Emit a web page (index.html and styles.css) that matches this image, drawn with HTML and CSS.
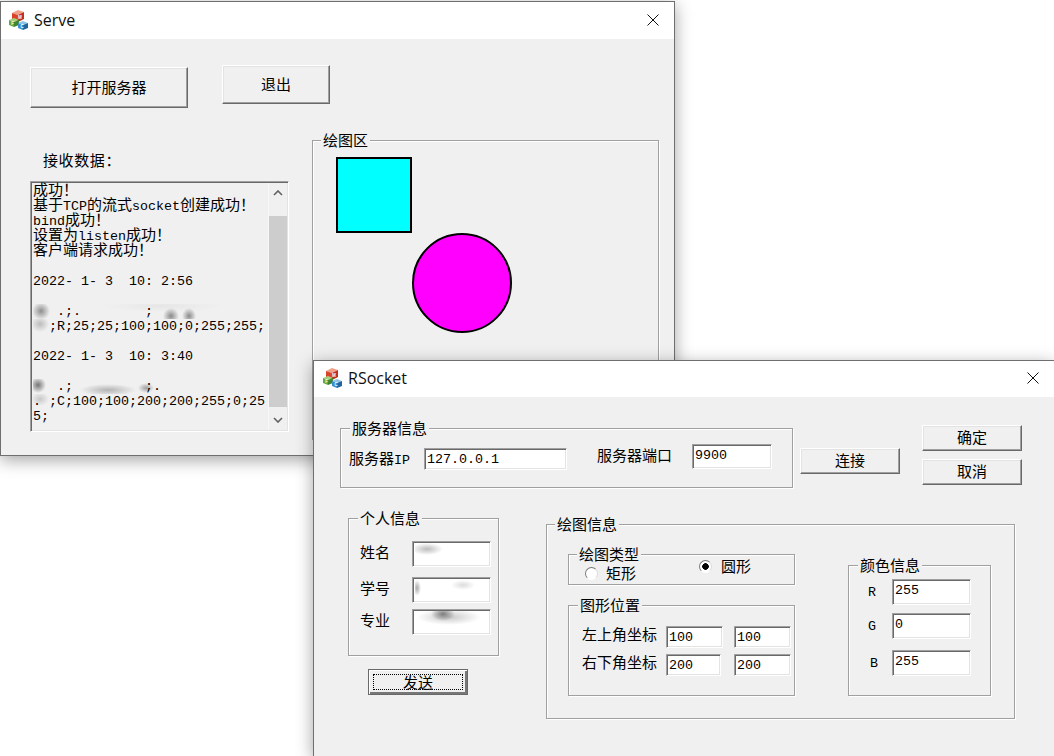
FILE: index.html
```html
<!DOCTYPE html>
<html lang="zh">

<head>
  <meta charset="UTF-8">
  <title>Serve / RSocket</title>
  <link rel="stylesheet" href="styles.css">
</head>

<body>

  <!-- Serve 窗口 -->
  <div class="window serve">
    <div class="titlebar">
      <svg class="app-icon" viewBox="0 0 19 20">
        <g id="mfc">
          <polygon points="3,3 9,0 15,2 9,5" fill="#f0a088" />
          <polygon points="3,3 9,5 9,12 3,10" fill="#d8432a" />
          <polygon points="9,5 15,2 15,9 9,12" fill="#c2301c" />
          <polygon points="0,10 5,8 10,10 5,12" fill="#a4d07e" />
          <polygon points="0,10 5,12 5,17 0,15" fill="#5fa83f" />
          <polygon points="5,12 10,10 10,15 5,17" fill="#3f8430" />
          <polygon points="9,13 14,11 19,13 14,15" fill="#8cc4e8" />
          <polygon points="9,13 14,15 14,20 9,18" fill="#3b8fca" />
          <polygon points="14,15 19,13 19,18 14,20" fill="#1f669f" />
          <text x="9" y="8.5" class="icon-letter">M</text>
          <text x="2.2" y="15" class="icon-letter">F</text>
          <text x="11.5" y="18" class="icon-letter">C</text>
        </g>
      </svg>
      <span class="title-text">Serve</span>
      <svg class="close-x" viewBox="0 0 12 12">
        <path d="M0.5 0.5 L11.5 11.5 M11.5 0.5 L0.5 11.5" stroke="#111" fill="none" />
      </svg>
    </div>
    <div class="dialog serve-body">
      <div class="serve-buttons">
        <div class="btn btn-open">打开服务器</div>
        <div class="btn btn-quit">退出</div>
      </div>
      <div class="serve-main">
        <div class="serve-left">
          <div class="recv-label">接收数据：</div>
          <div class="log-box">
            <div class="log-text">
              <div class="log-line"><span class="cn">成功！</span></div>
              <div class="log-line"><span class="cn">基于</span>TCP<span class="cn">的流式</span>socket<span class="cn">创建成功！</span></div>
              <div class="log-line">bind<span class="cn">成功！</span></div>
              <div class="log-line"><span class="cn">设置为</span>listen<span class="cn">成功！</span></div>
              <div class="log-line"><span class="cn">客户端请求成功！</span></div>
              <div class="log-line"></div>
              <div class="log-line">2022- 1- 3  10: 2:56</div>
              <div class="log-line"></div>
              <div class="log-line smudge-a">   .;.        ;</div>
              <div class="log-line smudge-b">  ;R;25;25;100;100;0;255;255;</div>
              <div class="log-line"></div>
              <div class="log-line">2022- 1- 3  10: 3:40</div>
              <div class="log-line"></div>
              <div class="log-line smudge-c">   .;         ;.</div>
              <div class="log-line smudge-d">. ;C;100;100;200;200;255;0;25</div>
              <div class="log-line">5;</div>
            </div>
            <div class="scrollbar">
              <svg class="arrow" viewBox="0 0 10 6"><path d="M1 5 L5 1 L9 5" stroke="#606060" stroke-width="1.6" fill="none" /></svg>
              <div class="scroll-track"><div class="scroll-thumb"></div></div>
              <svg class="arrow" viewBox="0 0 10 6"><path d="M1 1 L5 5 L9 1" stroke="#606060" stroke-width="1.6" fill="none" /></svg>
            </div>
          </div>
        </div>
        <div class="group draw-area">
          <span class="group-title">绘图区</span>
          <svg class="canvas" width="345" height="298">
            <rect x="24" y="17" width="74" height="74" fill="#00ffff" stroke="#000" stroke-width="2" />
            <circle cx="149" cy="142" r="49" fill="#ff00ff" stroke="#000" stroke-width="2" />
          </svg>
        </div>
      </div>
    </div>
  </div>

  <!-- RSocket 窗口 -->
  <div class="window rsocket">
    <div class="titlebar">
      <svg class="app-icon" viewBox="0 0 19 20"><use href="#mfc" /></svg>
      <span class="title-text">RSocket</span>
      <svg class="close-x" viewBox="0 0 12 12">
        <path d="M0.5 0.5 L11.5 11.5 M11.5 0.5 L0.5 11.5" stroke="#111" fill="none" />
      </svg>
    </div>
    <div class="dialog rsocket-body">

      <div class="top-row">
        <div class="group server-group">
          <span class="group-title">服务器信息</span>
          <div class="label ip-label">服务器<span class="latin">IP</span></div>
          <div class="edit ip-edit">127.0.0.1</div>
          <div class="label port-label">服务器端口</div>
          <div class="edit port-edit">9900</div>
        </div>
        <div class="btn btn-connect">连接</div>
        <div class="ok-col">
          <div class="btn btn-small">确定</div>
          <div class="btn btn-small">取消</div>
        </div>
      </div>

      <div class="bottom-row">
        <div class="person-col">
          <div class="group person-group">
            <span class="group-title">个人信息</span>
            <div class="person-row">
              <div class="label person-label">姓名</div>
              <div class="edit person-edit"><span class="blot blot-name"></span></div>
            </div>
            <div class="person-row">
              <div class="label person-label">学号</div>
              <div class="edit person-edit"><span class="blot blot-id"></span></div>
            </div>
            <div class="person-row">
              <div class="label person-label">专业</div>
              <div class="edit person-edit"><span class="blot blot-major"></span></div>
            </div>
          </div>
          <div class="btn btn-send"><span class="focus-box">发送</span></div>
        </div>

        <div class="group draw-group">
          <span class="group-title">绘图信息</span>
          <div class="draw-left">
            <div class="group type-group">
              <span class="group-title">绘图类型</span>
              <div class="radio-item radio-rect"><span class="radio"></span>矩形</div>
              <div class="radio-item radio-circle"><span class="radio checked"></span>圆形</div>
            </div>
            <div class="group pos-group">
              <span class="group-title">图形位置</span>
              <div class="pos-row">
                <div class="label pos-label">左上角坐标</div>
                <div class="edit pos-edit">100</div>
                <div class="edit pos-edit">100</div>
              </div>
              <div class="pos-row">
                <div class="label pos-label">右下角坐标</div>
                <div class="edit pos-edit narrow">200</div>
                <div class="edit pos-edit">200</div>
              </div>
            </div>
          </div>
          <div class="group color-group">
            <span class="group-title">颜色信息</span>
            <div class="color-row">
              <div class="color-label latin">R</div>
              <div class="edit color-edit">255</div>
            </div>
            <div class="color-row">
              <div class="color-label latin">G</div>
              <div class="edit color-edit">0</div>
            </div>
            <div class="color-row">
              <div class="color-label latin shift">B</div>
              <div class="edit color-edit">255</div>
            </div>
          </div>
        </div>
      </div>

    </div>
  </div>

</body>

</html>
```

FILE: styles.css
```css
* {
  box-sizing: border-box;
}

html,
body {
  margin: 0;
  height: 100%;
  overflow: hidden;
  background: #fff;
}

body {
  position: relative;
  font-family: "Noto Sans CJK SC", sans-serif;
  font-size: 15px;
  color: #000;
}

.latin {
  font-family: "Liberation Mono", monospace;
  font-size: 13.33px;
}

/* 窗口 */
.window {
  position: absolute;
  border: 1px solid #6f6f6f;
  background: #f0f0f0;
  box-shadow: 0 4px 16px rgba(0, 0, 0, 0.36);
  overflow: hidden;
}

.serve {
  left: 0;
  top: 1px;
  width: 675px;
  height: 455px;
}

.rsocket {
  left: 313px;
  top: 360px;
  width: 741px;
  height: 396px;
  border-right: none;
  border-bottom: none;
}

.titlebar {
  display: flex;
  align-items: center;
  height: 37px;
  padding: 0 15px 2px 8px;
  background: #fff;
}

.rsocket .titlebar {
  height: 36px;
  padding-left: 9px;
}

.app-icon {
  width: 19px;
  height: 20px;
  margin-right: 6px;
}

.icon-letter {
  font-family: "Liberation Sans", sans-serif;
  font-size: 4.5px;
  font-weight: bold;
  fill: #fff;
}

.title-text {
  font-family: "Open Sans", sans-serif;
  font-size: 16px;
  color: #111;
}

.close-x {
  width: 12px;
  height: 12px;
  margin-left: auto;
}

/* 控件 */
.btn {
  display: flex;
  align-items: center;
  justify-content: center;
  padding-bottom: 3px;
  background: #f0f0f0;
  border: 1px solid;
  border-color: #fff #696969 #696969 #fff;
  box-shadow: inset -1px -1px 0 #a0a0a0, inset 1px 1px 0 #e3e3e3;
}

.edit {
  flex: none;
  font-family: "Liberation Mono", monospace;
  font-size: 13.33px;
  line-height: 18px;
  padding: 2px 0 0 2px;
  background: #fff;
  border: 1px solid;
  border-color: #a0a0a0 #fff #fff #a0a0a0;
  box-shadow: inset 1px 1px 0 #696969, inset -1px -1px 0 #e3e3e3;
  white-space: pre;
  overflow: hidden;
}

.group {
  position: relative;
  border: 1px solid #a0a0a0;
  box-shadow: 1px 1px 0 #fff, inset 1px 1px 0 #fff;
}

.group-title {
  position: absolute;
  top: -11px;
  left: 9px;
  padding: 0 2px;
  line-height: 20px;
  background: #f0f0f0;
  white-space: nowrap;
}

.label {
  flex: none;
  line-height: 20px;
  white-space: nowrap;
}

/* Serve */
.serve-body {
  height: 416px;
  padding: 26px 0 0 29px;
}

.serve-buttons {
  display: flex;
  align-items: flex-start;
  height: 43px;
}

.btn-open {
  width: 158px;
  height: 41px;
  margin-top: 2px;
}

.btn-quit {
  width: 108px;
  height: 39px;
  margin-left: 34px;
}

.serve-main {
  display: flex;
  margin-top: 32px;
}

.serve-left {
  width: 259px;
}

.recv-label {
  margin-top: 10px;
  padding-left: 13px;
  line-height: 20px;
  letter-spacing: 0.6px;
}

.log-box {
  display: flex;
  height: 251px;
  margin-top: 11px;
  background: #f0f0f0;
  border: 1px solid;
  border-color: #a0a0a0 #fff #fff #a0a0a0;
  box-shadow: inset 1px 1px 0 #696969, inset -1px -1px 0 #e3e3e3;
  padding: 1px;
}

.log-text {
  flex: 1;
  padding: 1px 0 0 1px;
  font-family: "Liberation Mono", monospace;
  font-size: 13.33px;
  line-height: 15px;
}

.log-line {
  height: 15px;
  white-space: pre;
}

.cn {
  font-family: "Noto Sans CJK SC", sans-serif;
  font-size: 15px;
  line-height: 0;
}

/* 打码的部分 */
.smudge-a {
  background:
    radial-gradient(ellipse 9px 9px at 8px 7px, #8e8e8e, transparent),
    radial-gradient(ellipse 8px 8px at 138px 12px, #8a8a8a, transparent),
    radial-gradient(ellipse 7px 8px at 156px 12px, #8a8a8a, transparent),
    radial-gradient(ellipse 60px 6px at 130px 2px, #e6e6e6, transparent);
}

.smudge-b {
  background:
    radial-gradient(ellipse 9px 8px at 7px 5px, #bcbcbc, transparent);
}

.smudge-c {
  background:
    radial-gradient(ellipse 8px 8px at 5px 6px, #747474, transparent),
    radial-gradient(ellipse 28px 6px at 75px 11px, #b4b4b4, transparent),
    radial-gradient(ellipse 8px 5px at 113px 9px, #a0a0a0, transparent);
}

.smudge-d {
  background:
    radial-gradient(ellipse 9px 7px at 7px 5px, #c8c8c8, transparent);
}

.scrollbar {
  display: flex;
  flex-direction: column;
  align-items: center;
  width: 19px;
  background: #f0f0f0;
  border-left: 1px solid #f8f8f8;
}

.arrow {
  flex: none;
  width: 10px;
  height: 6px;
  margin: 7px 0;
}

.scroll-track {
  flex: 1;
  width: 100%;
  padding: 13px 0 3px;
}

.scroll-thumb {
  height: 100%;
  background: #cdcdcd;
}

.draw-area {
  width: 347px;
  height: 300px;
  margin-left: 23px;
}

.draw-area .group-title {
  left: 8px;
}

.canvas {
  display: block;
}

/* RSocket */
.rsocket-body {
  height: 360px;
  padding: 28px 0 0 26px;
}

.top-row {
  display: flex;
  align-items: flex-start;
  height: 63px;
}

.server-group {
  display: flex;
  align-items: flex-start;
  width: 453px;
  height: 60px;
  margin-top: 3px;
  padding: 15px 0 0 8px;
}

.ip-label {
  width: 75px;
  margin-top: 4px;
}

.ip-edit {
  width: 143px;
  height: 22px;
  margin-top: 4px;
}

.port-label {
  width: 95px;
  margin: 1px 0 0 30px;
}

.port-edit {
  width: 80px;
  height: 25px;
}

.btn-connect {
  width: 100px;
  height: 26px;
  margin: 23px 0 0 7px;
}

.ok-col {
  display: flex;
  flex-direction: column;
  gap: 8px;
  margin-left: 22px;
}

.btn-small {
  width: 100px;
  height: 26px;
}

.bottom-row {
  display: flex;
  align-items: flex-start;
  margin: 30px 0 0 8px;
}

.person-col {
  width: 151px;
}

.person-group {
  height: 138px;
  padding: 22px 0 0 11px;
}

.person-row {
  display: flex;
  align-items: center;
}

.person-row + .person-row {
  margin-top: 10px;
}

.person-row:last-child {
  margin-top: 6px;
}

.person-label {
  width: 52px;
  margin-bottom: 4px;
}

.person-edit {
  width: 79px;
  height: 26px;
  padding-top: 1px;
}

.blot {
  display: block;
  height: 14px;
}

.blot-name {
  width: 32px;
  background: radial-gradient(ellipse 16px 6px at 12px 6px, #bcbcbc, transparent);
}

.blot-id {
  width: 74px;
  height: 16px;
  background:
    radial-gradient(ellipse 4px 8px at 2px 9px, #a8a8a8, transparent),
    radial-gradient(ellipse 12px 5px at 48px 6px, #dcdcdc, transparent);
}

.blot-major {
  width: 68px;
  height: 16px;
  background:
    radial-gradient(ellipse 12px 7px at 28px 3px, #7d7d7d, transparent),
    radial-gradient(ellipse 32px 8px at 34px 6px, #c8c8c8, transparent);
}

.btn-send {
  width: 100px;
  height: 26px;
  margin: 13px 0 0 20px;
  padding: 3px;
  border-color: #696969;
  box-shadow: inset 1px 1px 0 #fff, inset -2px -2px 0 #777;
}

.focus-box {
  flex: 1;
  align-self: stretch;
  margin: 1px;
  line-height: 14px;
  text-align: center;
  border: 1px dotted #000;
}

.draw-group {
  display: flex;
  align-items: flex-start;
  width: 469px;
  height: 195px;
  margin: 6px 0 0 47px;
  padding: 29px 0 0 21px;
}

.draw-group > .group-title {
  left: 8px;
}

.draw-left {
  flex: none;
  width: 227px;
}

.type-group {
  display: flex;
  align-items: flex-start;
  height: 31px;
  padding-left: 16px;
}

.type-group .group-title {
  left: 8px;
}

.radio-item {
  display: flex;
  align-items: center;
  gap: 8px;
  height: 16px;
  line-height: 16px;
  white-space: nowrap;
}

.radio-rect {
  width: 51px;
  margin-top: 10px;
}

.radio-circle {
  margin: 3px 0 0 63px;
  gap: 9px;
}

.radio {
  width: 13px;
  height: 13px;
  border-radius: 50%;
  background: #fff;
  border: 1px solid;
  border-color: #787878 #dcdcdc #fff #787878;
}

.radio.checked {
  background: radial-gradient(circle, #000 3px, #fff 3.6px);
}

.pos-group {
  height: 91px;
  margin-top: 20px;
  padding: 20px 0 0 13px;
}

.pos-row {
  display: flex;
  align-items: flex-start;
  height: 22px;
}

.pos-row + .pos-row {
  margin-top: 6px;
}

.pos-label {
  width: 84px;
  margin-top: -2px;
}

.pos-edit {
  width: 57px;
  height: 22px;
  margin-right: 11px;
}

.pos-edit.narrow {
  width: 55px;
  margin-right: 13px;
}

.color-group {
  flex: none;
  width: 143px;
  height: 131px;
  margin: 11px 0 0 53px;
  padding: 13px 0 0 19px;
}

.color-row {
  display: flex;
  height: 26px;
}

.color-row + .color-row {
  margin-top: 8px;
}

.color-row:last-child {
  margin-top: 11px;
}

.color-label {
  width: 24px;
  padding-top: 5px;
  line-height: 18px;
}

.color-label.shift {
  padding-left: 2px;
}

.color-edit {
  width: 79px;
  height: 26px;
}
```
